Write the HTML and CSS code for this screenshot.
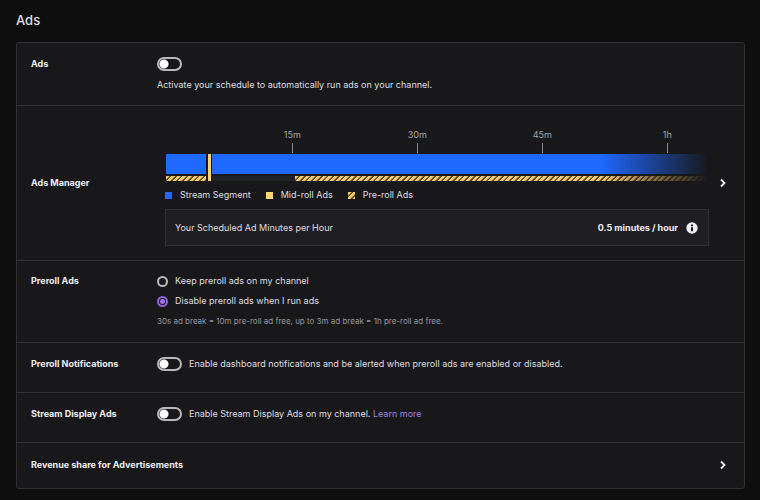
FILE: index.html
```html
<!DOCTYPE html>
<html lang="en">
<head>
<meta charset="utf-8">
<title>Ads</title>
<link rel="stylesheet" href="styles.css">
</head>
<body>
<main class="page">
  <h1 class="title">Ads</h1>
  <div class="card">
    <section class="row row-ads">
      <label class="name" for="ads">Ads</label>
      <div class="body">
        <input class="toggle" type="checkbox" role="switch" id="ads">
        <p class="text">Activate your schedule to automatically run ads on your channel.</p>
      </div>
    </section>
    <section class="row row-manager">
      <h2 class="name">Ads Manager</h2>
      <div class="manager">
        <div class="chart">
          <div class="axis">
            <span class="tick">15m</span><span class="tick">30m</span><span class="tick">45m</span><span class="tick">1h</span>
          </div>
          <div class="timeline">
            <div class="stream"></div>
            <div class="midroll"></div>
            <div class="stream stream-rest"></div>
            <div class="preroll"></div>
            <div class="free"></div>
            <div class="preroll"></div>
          </div>
        </div>
        <ul class="legend">
          <li><span class="swatch swatch-stream"></span>Stream Segment</li>
          <li><span class="swatch swatch-mid"></span>Mid-roll Ads</li>
          <li><span class="swatch swatch-pre"></span>Pre-roll Ads</li>
        </ul>
        <div class="summary">
          <span>Your Scheduled Ad Minutes per Hour</span>
          <strong class="rate">0.5 minutes / hour</strong>
          <button class="icon-button" type="button" aria-label="More information">
            <svg width="12" height="12" viewBox="0 0 12 12"><circle cx="6" cy="6" r="5.7" fill="#efeff1"/><path d="M5 2.6h2v1.6H5zM5 5.2h2v4H5z" fill="#1f1f23"/></svg>
          </button>
        </div>
      </div>
      <button class="icon-button" type="button" aria-label="Open Ads Manager">
        <svg width="8" height="10" viewBox="0 0 8 10"><path d="M2 1.500 5.500 5 2 8.500" fill="none" stroke="#efeff1" stroke-width="1.8"/></svg>
      </button>
    </section>
    <section class="row row-preroll">
      <h2 class="name">Preroll Ads</h2>
      <div class="body">
        <label class="option"><input class="radio" type="radio" name="preroll">Keep preroll ads on my channel</label>
        <label class="option"><input class="radio" type="radio" name="preroll" checked>Disable preroll ads when I run ads</label>
        <p class="hint">30s ad break = 10m pre-roll ad free, up to 3m ad break = 1h pre-roll ad free.</p>
      </div>
    </section>
    <section class="row row-single">
      <h2 class="name">Preroll Notifications</h2>
      <label class="body inline"><input class="toggle" type="checkbox" role="switch">Enable dashboard notifications and be alerted when preroll ads are enabled or disabled.</label>
    </section>
    <section class="row row-single">
      <h2 class="name">Stream Display Ads</h2>
      <div class="body inline"><input class="toggle" type="checkbox" role="switch" id="display"><span><label for="display">Enable Stream Display Ads on my channel.</label> <a href="#">Learn more</a></span></div>
    </section>
    <section class="row row-revenue">
      <h2 class="name">Revenue share for Advertisements</h2>
      <button class="icon-button" type="button" aria-label="Open revenue share">
        <svg width="8" height="10" viewBox="0 0 8 10"><path d="M2 1.500 5.500 5 2 8.500" fill="none" stroke="#efeff1" stroke-width="1.8"/></svg>
      </button>
    </section>
  </div>
</main>
</body>
</html>
```
FILE: styles.css
```css
* { box-sizing: border-box; }

body {
  margin: 0;
  background: #0e0e0f;
  color: #dedee3;
  font: 9px/14px Inter, "Liberation Sans", sans-serif;
}

h1, h2, p, ul { margin: 0; padding: 0; }

.page { padding: 12px 15px 11px 16px; }

.title {
  margin-bottom: 14px;
  font-size: 13px;
  line-height: 16px;
  font-weight: 500;
}

.card {
  background: #18181b;
  border: 1px solid #2f2f34;
  border-radius: 3px;
}

.row {
  display: grid;
  grid-template-columns: 126px 1fr;
  padding: 14px;
}

.row + .row { border-top: 1px solid #2f2f34; }

.name {
  font-size: 9px;
  line-height: 14px;
  font-weight: 700;
  color: #efeff1;
}

.row-ads { padding-bottom: 13px; }
.text { margin-top: 7px; }

.toggle {
  appearance: none;
  display: block;
  flex: none;
  width: 25px;
  height: 14px;
  margin: 0;
  border: 2px solid #b8b8bc;
  border-radius: 7px;
  background: radial-gradient(circle at 5px 50%, #fff 4px, transparent 5px);
}

.toggle:checked { background: #a970ff; }

.row-manager {
  grid-template-columns: 134px 1fr auto;
  align-items: center;
  padding: 0 17px 0 14px;
}

.manager { padding: 22px 0 14px; }

.chart { padding-left: 1px; }

.axis { display: flex; color: #a3a3a8; }

.tick {
  display: flex;
  flex-direction: column;
  align-items: center;
  gap: 1px;
  width: 15.4%;
  margin-left: 7.7%;
}

.tick:first-child { margin-left: 15.6%; }

.tick::after {
  content: "";
  width: 1px;
  height: 10px;
  background: #88888c;
}

.timeline {
  display: grid;
  grid-template-columns: 40fr 6px 83fr 413fr;
  grid-template-rows: 20px 5px;
  row-gap: 2px;
  margin-top: 1px;
  mask-image: linear-gradient(to right, #000 80%, transparent);
}

.stream { background: #1f69ff; }
.stream-rest { grid-column: 3 / 5; }

.midroll {
  grid-row: 1 / 3;
  grid-column: 2;
  margin: 0 1px 0 2px;
  background: #ffd37a;
}

.free { grid-column: 3; background: #222229; }

.preroll, .swatch-pre {
  background: repeating-linear-gradient(135deg, #f9cd78 0 2px, #6b4a16 3px 4px);
}

.legend {
  display: flex;
  gap: 15px;
  margin-top: 7px;
  list-style: none;
}

.legend li { display: flex; align-items: center; gap: 8px; }
.swatch { width: 7px; height: 7px; }
.swatch-stream { background: #1f69ff; }
.swatch-mid { background: #ffd37a; }

.summary {
  display: flex;
  align-items: center;
  margin-top: 7px;
  padding: 11px 10px 10px 9px;
  border: 1px solid #303035;
  background: #1f1f23;
}

.rate { margin-left: auto; margin-right: 8px; color: #efeff1; }

.icon-button {
  display: flex;
  padding: 0;
  border: 0;
  background: none;
}

.row-manager > .icon-button { margin-left: 10px; }

.row-preroll { padding: 13px 14px; }

.option { display: flex; align-items: center; gap: 7px; margin-bottom: 6px; }

.radio {
  appearance: none;
  flex: none;
  width: 11px;
  height: 11px;
  margin: 0;
  border: 2px solid #b8b8bc;
  border-radius: 50%;
}

.radio:checked {
  border-color: #9065dc;
  background: radial-gradient(circle, #a970ff 2px, #18181b 3px);
}

.hint { font-size: 8px; line-height: 15px; color: #96969c; }

.row-single { padding: 14px 14px 21px; }
.inline { display: flex; align-items: center; gap: 7px; }

.inline a { color: #9d83df; text-decoration: none; }

.row-revenue {
  grid-template-columns: 1fr auto;
  align-items: center;
  padding: 15px 17px 16px 14px;
}
```
